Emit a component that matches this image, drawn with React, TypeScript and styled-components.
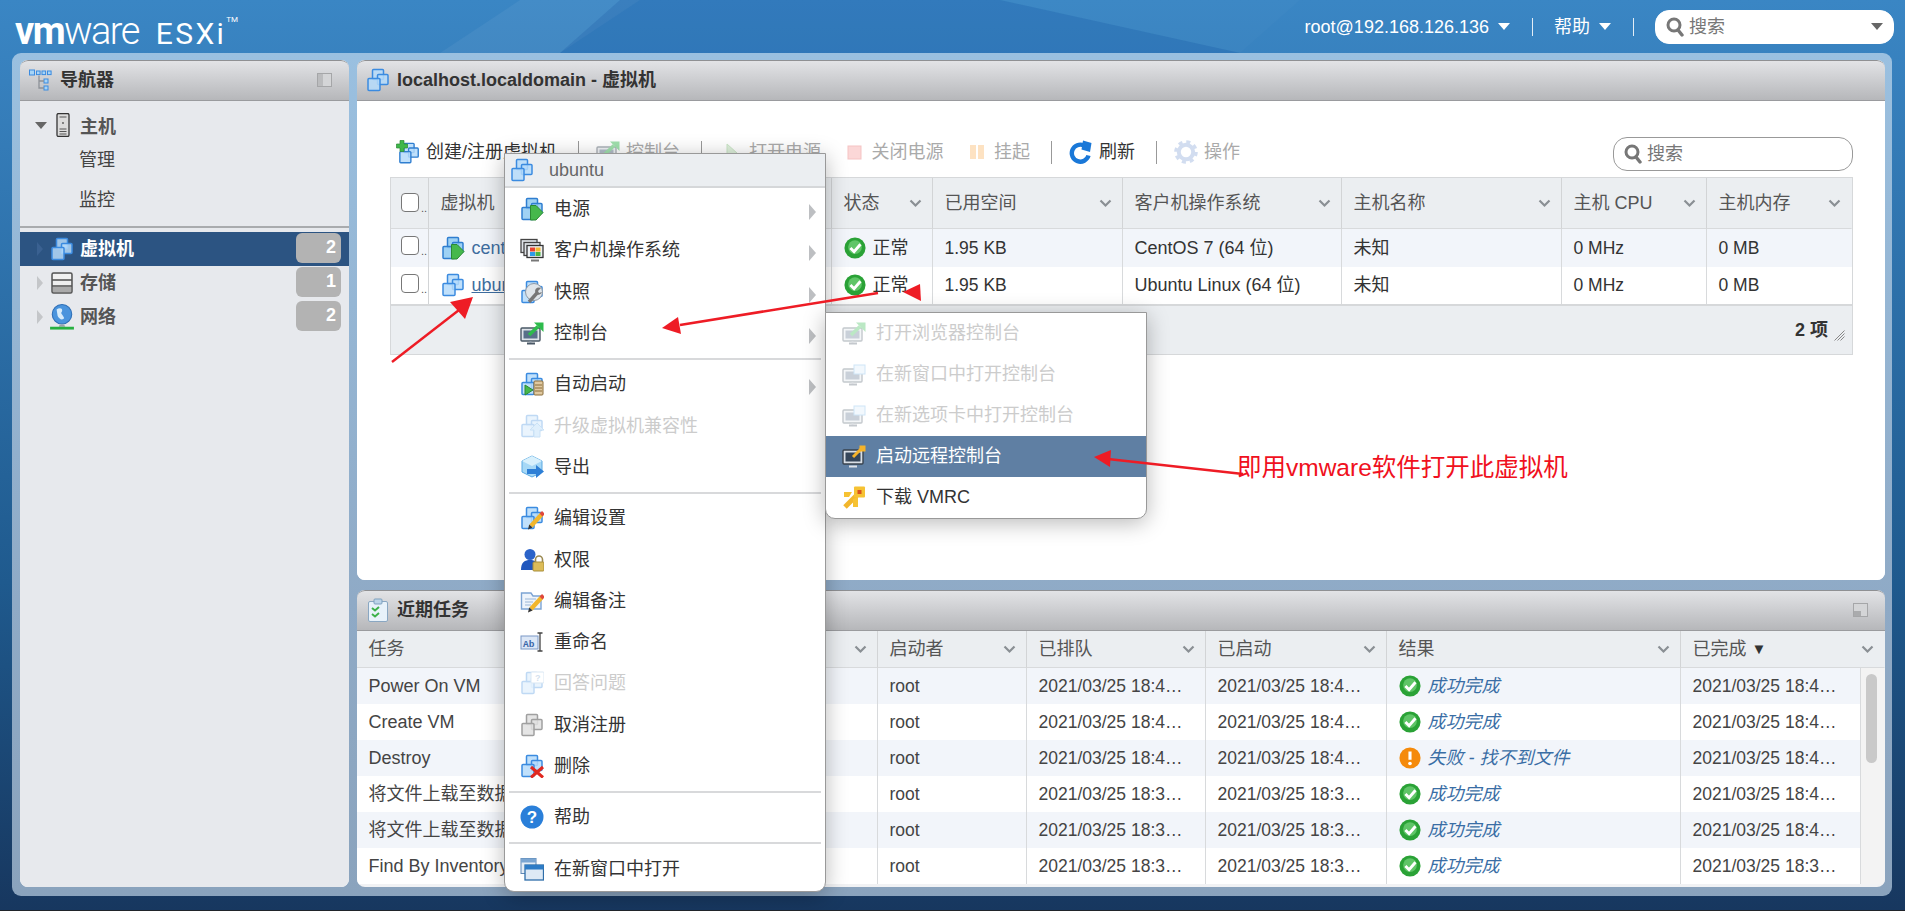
import React from "react";
import styled, { createGlobalStyle } from "styled-components";

const Global = createGlobalStyle`
  html, body { margin: 0; padding: 0; width: 1905px; height: 911px; overflow: hidden; }
  body { font-family: "Liberation Sans", "Noto Sans CJK SC", sans-serif; font-size: 18px; line-height: 20px; color: #333; }
  * { box-sizing: border-box; }
`;

const Page = styled.div`
  position: relative;
  width: 1905px;
  height: 911px;
  display: flex;
  flex-direction: column;
  overflow: hidden;
  background: linear-gradient(180deg, #3a86c4 0%, #3780bd 9%, #1f5a8e 64%, #17375f 100%);
  border-bottom: 1px solid #20242a;
`;
const Facets = styled.svg`
  position: absolute;
  left: 0;
  top: 0;
`;
const TopBar = styled.header`
  position: relative;
  height: 53px;
  flex: none;
  display: flex;
  align-items: center;
  padding: 0 11px 0 15px;
  color: #fff;
`;
const Logo = styled.div`
  display: flex;
  align-items: baseline;
  font-family: Roboto, "Liberation Sans", sans-serif;
  line-height: 1;
  margin-top: 9px;
`;
const LogoVm = styled.span`
  font-size: 38px;
  letter-spacing: -1.6px;
`;
const LogoBold = styled.b`
  font-weight: 700;
`;
const LogoLight = styled.span`
  font-weight: 300;
`;
const LogoEsx = styled.span`
  font-size: 30px;
  letter-spacing: 2.4px;
  margin-left: 17px;
`;
const LogoTm = styled.sup`
  font-size: 8px;
  align-self: flex-start;
  line-height: 1;
  margin-top: 4px;
  margin-left: 0;
`;
const TopRight = styled.div`
  margin-left: auto;
  display: flex;
  align-items: center;
`;
const TopLabel = styled.span`
  color: #fff;
`;
const WhiteCaret = styled.i`
  width: 0;
  height: 0;
  margin-left: 9px;
  border-left: 6px solid transparent;
  border-right: 6px solid transparent;
  border-top: 7px solid #fff;
`;
const TopSep = styled.i`
  width: 1px;
  height: 18px;
  background: #e3edf6;
  margin: 0 21px 0 22px;
`;
const SearchBox = styled.div<{ $w: number; $outlined?: boolean }>`
  width: ${(p) => p.$w}px;
  height: 34px;
  flex: none;
  display: flex;
  align-items: center;
  gap: 5px;
  padding: 0 10px;
  background: #fff;
  border-radius: 14px;
  border: 1px solid ${(p) => (p.$outlined ? "#999" : "#fff")};
  color: #777;
`;
const GrayCaret = styled.i`
  margin-left: auto;
  width: 0;
  height: 0;
  border-left: 6px solid transparent;
  border-right: 6px solid transparent;
  border-top: 7px solid #666;
`;
const Frame = styled.main`
  position: relative;
  width: 1880px;
  height: 843px;
  flex: none;
  margin-left: 12px;
  padding: 7px 7px 9px 8px;
  display: flex;
  gap: 8px;
  border-radius: 9px;
  background: linear-gradient(180deg, #9ac0e0 0%, #8faac6 65%, #8aa3bd 100%);
`;
const Panel = styled.section<{ $bg?: string }>`
  display: flex;
  flex-direction: column;
  overflow: hidden;
  border-radius: 8px;
  background: ${(p) => p.$bg || "#fff"};
`;
const NavPanel = styled(Panel)`
  width: 329px;
  flex: none;
`;
const RightCol = styled.div`
  flex: 1;
  min-width: 0;
  display: flex;
  flex-direction: column;
  gap: 10px;
`;
const VmPanel = styled(Panel)`
  height: 520px;
  flex: none;
`;
const TaskPanel = styled(Panel)`
  flex: 1;
  background: #f1f2f4;
`;
const PanelHead = styled.div`
  height: 41px;
  flex: none;
  display: flex;
  align-items: center;
  gap: 7px;
  padding: 0 17px 1px 9px;
  border-top: 1px solid #8f9093;
  border-bottom: 1px solid #9a9b9e;
  border-radius: 8px 8px 0 0;
  background: linear-gradient(180deg, #e2e3e6 0%, #b6b7ba 100%);
  font-weight: 700;
  color: #333;
`;
const HeadTitle = styled.span`
  flex: 1;
`;
const NavBody = styled.div`
  flex: 1;
  padding-top: 11px;
  background: #e7e9ed;
`;
const HostRow = styled.div`
  height: 26px;
  display: flex;
  align-items: center;
  padding-left: 15px;
  font-weight: 700;
  color: #555;
`;
const DownTri = styled.i`
  width: 0;
  height: 0;
  border-left: 6px solid transparent;
  border-right: 6px solid transparent;
  border-top: 7px solid #666;
  margin-right: 4px;
`;
const HostLabel = styled.span`
  margin-left: 5px;
  padding-top: 3px;
`;
const SubNav = styled.div`
  height: 40px;
  display: flex;
  align-items: center;
  padding: 3px 0 0 59px;
  color: #444;
`;
const NavDivider = styled.div`
  height: 2px;
  margin: 8px 0 4px;
  background: #a9abae;
`;
const NavItem = styled.div<{ $on?: boolean }>`
  height: 34px;
  display: flex;
  align-items: center;
  padding: 0 8px 0 17px;
  font-weight: 700;
  background: ${(p) => (p.$on ? "#2c5482" : "transparent")};
  color: ${(p) => (p.$on ? "#fff" : "#555")};
`;
const RightTri = styled.i<{ $on?: boolean }>`
  width: 0;
  height: 0;
  border-top: 7px solid transparent;
  border-bottom: 7px solid transparent;
  border-left: 6px solid ${(p) => (p.$on ? "#3a6191" : "#c4c6c9")};
  margin-right: 6px;
`;
const NavIcon = styled.span`
  width: 26px;
  height: 26px;
  flex: none;
  display: flex;
  align-items: center;
  justify-content: center;
  margin-right: 5px;
`;
const Badge = styled.span`
  margin-left: auto;
  align-self: flex-start;
  margin-top: 1px;
  width: 45px;
  height: 30px;
  padding-right: 5px;
  border-radius: 6px;
  background: #b3b3b3;
  color: #fff;
  font-weight: 700;
  text-align: right;
  line-height: 28px;
`;
const VmBody = styled.div`
  flex: 1;
  padding: 36px 32px 0 33px;
  background: #fff;
`;
const Toolbar = styled.div`
  height: 34px;
  display: flex;
  align-items: flex-start;
  gap: 20.5px;
  padding-left: 6px;
  margin-bottom: 6px;
`;
const Tool = styled.div<{ $off?: boolean }>`
  height: 29px;
  display: flex;
  align-items: center;
  gap: 6px;
  color: ${(p) => (p.$off ? "#aaa" : "#333")};
  white-space: nowrap;
`;
const ToolIcon = styled.span<{ $off?: boolean }>`
  width: 24px;
  height: 24px;
  display: flex;
  opacity: ${(p) => (p.$off ? 0.45 : 1)};
`;
const ToolSep = styled.i`
  width: 1px;
  height: 23px;
  margin: 4px -3px 0 0;
  background: #999;
`;
const ToolSearch = styled.div`
  margin-left: auto;
`;
const VmGrid = styled.div`
  display: grid;
  grid-template-columns: 38px 403px 101px 190px 219px 220px 145px 145px;
  grid-template-rows: 51px 38px 37px;
  border-top: 1px solid #d6d8da;
  border-left: 1px solid #d6d8da;
  border-right: 1px solid #d6d8da;
`;
const HeadCell = styled.div<{ $noRule?: boolean }>`
  display: flex;
  align-items: center;
  padding: 0 10px 0 11.5px;
  background: #ebeef1;
  color: #555;
  border-right: 1px solid ${(p) => (p.$noRule ? "transparent" : "#d2d4d6")};
  border-bottom: 1px solid #d8dadc;
  white-space: nowrap;
`;
const Cell = styled.div<{ $alt?: boolean; $noRule?: boolean; $num?: boolean }>`
  display: flex;
  align-items: center;
  gap: 7px;
  padding: 0 11.5px 1px;
  font-size: ${(p) => (p.$num ? "17.5px" : "18px")};
  background: ${(p) => (p.$alt ? "#f2f5fa" : "#fff")};
  border-right: 1px solid ${(p) => (p.$noRule ? "transparent" : "#d8dadc")};
  color: #333;
  white-space: nowrap;
  overflow: hidden;
`;
const Chevron = styled.svg`
  margin-left: auto;
  flex: none;
`;
const CheckCell = styled.div<{ $top: number; $bg: string }>`
  display: flex;
  align-items: flex-start;
  padding: ${(p) => p.$top}px 0 0 10px;
  background: ${(p) => p.$bg};
  border-right: 1px solid #d2d4d6;
  border-bottom: ${(p) => (p.$top > 10 ? "1px solid #d8dadc" : "none")};
`;
const Check = styled.i`
  width: 18px;
  height: 19px;
  flex: none;
  background: #fff;
  border: 1px solid #777;
  border-radius: 4px;
`;
const Dots = styled.span`
  font-size: 11px;
  line-height: 1;
  color: #555;
  align-self: flex-start;
  margin: 10px 0 0 2px;
`;
const VmLink = styled.span<{ $under?: boolean }>`
  color: #3e6d9f;
  text-decoration: ${(p) => (p.$under ? "underline" : "none")};
`;
const GridFoot = styled.div`
  height: 51px;
  display: flex;
  align-items: center;
  justify-content: flex-end;
  gap: 6px;
  padding: 0 7px 0 0;
  background: #ebeef1;
  border: 1px solid #d6d8da;
  border-top-width: 2px;
  font-weight: 700;
`;
const Grip = styled.svg`
  margin-top: 10px;
`;
const TaskHeadGrid = styled.div`
  display: grid;
  height: 37px;
  flex: none;
  grid-template-columns: 303px 218px 149px 179px 181px 294px 204px;
`;
const TaskWrap = styled.div`
  display: flex;
`;
const TaskGrid = styled.div`
  display: grid;
  width: 1503px;
  grid-template-columns: 303px 218px 149px 179px 181px 294px 179px;
  grid-auto-rows: 36px;
`;
const TaskCell = styled(Cell)`
  color: #444;
`;
const ScrollTrack = styled.div`
  flex: 1;
  height: 216px;
  background: #f3f3f3;
  border-left: 1px solid #d8dadc;
  padding: 6px 0 0 5px;
`;
const ScrollThumb = styled.div`
  width: 11px;
  height: 89px;
  border-radius: 6px;
  background: #c9c9c9;
`;
const Result = styled.span`
  color: #3a6ea5;
  font-style: italic;
`;
const SortMark = styled.span`
  font-size: 15px;
  color: #333;
  margin-left: 5px;
`;
const Menu = styled.div<{ $x: number; $y: number; $z: number; $pad?: number }>`
  position: absolute;
  left: ${(p) => p.$x}px;
  top: ${(p) => p.$y}px;
  z-index: ${(p) => p.$z};
  width: 322px;
  padding-bottom: ${(p) => p.$pad || 0}px;
  background: #fff;
  border: 1px solid #999;
  border-radius: 0 0 10px 10px;
  box-shadow: 0 4px 22px rgba(0, 0, 0, 0.28);
  overflow: hidden;
`;
const MenuHead = styled.div`
  height: 34px;
  display: flex;
  align-items: center;
  gap: 15px;
  padding-left: 5px;
  background: #ebeef1;
  border-bottom: 2px solid #d5d7d9;
  color: #666;
`;
const MenuRow = styled.div<{ $off?: boolean; $on?: boolean }>`
  height: 41.3px;
  display: flex;
  align-items: center;
  gap: 10px;
  padding: 1px 9px 0 15px;
  color: ${(p) => (p.$on ? "#fff" : p.$off ? "#ccc" : "#333")};
  background: ${(p) => (p.$on ? "#5f7fa3" : "transparent")};
`;
const SubRow = styled(MenuRow)`
  height: 41px;
  padding-top: 0;
  padding-left: 16px;
  padding-bottom: 1px;
`;
const MenuIcon = styled.span<{ $off?: boolean }>`
  width: 24px;
  height: 24px;
  flex: none;
  display: flex;
  opacity: ${(p) => (p.$off ? 0.32 : 1)};
`;
const MenuArrow = styled.i`
  margin-left: auto;
  margin-top: 6px;
  width: 0;
  height: 0;
  border-top: 8px solid transparent;
  border-bottom: 8px solid transparent;
  border-left: 7px solid #bdbfc2;
`;
const MenuSep = styled.div`
  height: 2px;
  margin: 5px 4px 3px;
  background: #d8d9db;
`;
const Annotation = styled.div`
  position: absolute;
  left: 1237px;
  top: 454px;
  z-index: 6;
  font-size: 24.5px;
  line-height: 28px;
  color: #f01020;
  white-space: nowrap;
`;
const ArrowLayer = styled.svg`
  position: absolute;
  left: 0;
  top: 0;
  z-index: 5;
  pointer-events: none;
`;

const I = ({ children, s = 24 }: { children: React.ReactNode; s?: number }) => (
  <svg width={s} height={s} viewBox="0 0 24 24">{children}</svg>
);
const VmShape = ({ c = "#3b8be0", f = "#b5dbfa" }: { c?: string; f?: string }) => (
  <g fill={f} stroke={c} strokeWidth="1.5" fillOpacity="0.85">
    <rect x="6.5" y="1.5" width="11" height="10" rx="1" />
    <rect x="11.5" y="6.5" width="10.5" height="10" rx="1" />
    <rect x="2" y="10.5" width="12" height="12" rx="1" />
  </g>
);
const Pencil = () => (
  <g>
    <path d="M22 8 L11 20" stroke="#f2b62c" strokeWidth="4.4" />
    <path d="M23.5 6.4 L21 9" stroke="#e0483c" strokeWidth="4" />
    <path d="M8 23.5 L9.2 18.5 L12.6 21.6 Z" fill="#333" />
  </g>
);
const Monitor = ({ f = "#59708a" }: { f?: string }) => (
  <g>
    <rect x="1" y="7" width="19" height="13" rx="1" fill="#dfe4ea" stroke="#4a5866" strokeWidth="1.4" />
    <rect x="3.5" y="9.5" width="14" height="8" fill={f} />
    <path d="M7 22.5h8" stroke="#4a5866" strokeWidth="2" />
    <path d="M10.5 20v2" stroke="#8a96a2" strokeWidth="2" />
  </g>
);
const GoArrow = ({ c }: { c: string }) => (
  <g>
    <path d="M9 14 L18 5.5" stroke={c} strokeWidth="3.6" />
    <path d="M14 1.5 H23.5 V11 Z" fill={c} />
  </g>
);
const IconVm = () => <I><VmShape /></I>;
const IconVmOn = () => (
  <I>
    <VmShape c="#2f7ed0" f="#8fcaf2" />
    <path d="M10.5 8.5h5.5l7 7-7 7.5h-5.5z" fill="#46b84c" stroke="#2b8a33" />
  </I>
);
const IconGuest = () => (
  <I>
    <rect x="1" y="1.5" width="16" height="13" fill="#dfe3e7" stroke="#444" strokeWidth="1.3" />
    <rect x="4" y="4.5" width="16" height="13" fill="#dfe3e7" stroke="#444" strokeWidth="1.3" />
    <rect x="7" y="7.5" width="16" height="12" fill="#eef1f4" stroke="#333" strokeWidth="1.3" />
    <rect x="10" y="9.5" width="5" height="4" fill="#e8432e" />
    <rect x="15.5" y="9.5" width="5" height="4" fill="#f5b82e" />
    <rect x="10" y="14" width="5" height="4" fill="#2e9be8" />
    <rect x="15.5" y="14" width="5" height="4" fill="#4bb543" />
    <path d="M11 22.5h8" stroke="#777" strokeWidth="2" />
  </I>
);
const IconSnap = () => (
  <I>
    <VmShape />
    <circle cx="14" cy="12" r="8.5" fill="#dfe5ea" stroke="#8d99a6" />
    <path d="M9 22 L17 13" stroke="#777" strokeWidth="3.4" />
    <path d="M15 11a4 4 0 0 1 6-3l-3 3 1 2 3-1a4 4 0 0 1-6 2z" fill="#777" />
  </I>
);
const IconConsole = ({ c = "#2ebb4c" }: { c?: string }) => (
  <I><Monitor /><GoArrow c={c} /></I>
);
const IconConsoleWin = () => (
  <I><Monitor /><rect x="12" y="3" width="11" height="9" fill="#d7ecfb" stroke="#6fb2e8" /></I>
);
const IconRemote = () => (
  <I>
    <rect x="1" y="6" width="20" height="14" rx="1" fill="#d9dfe6" stroke="#39434e" strokeWidth="1.4" />
    <rect x="3.5" y="8.5" width="15" height="9" fill="#35465a" />
    <path d="M7 22.5h8" stroke="#dfe4ea" strokeWidth="2" />
    <path d="M11 13 L19 5" stroke="#f5b32a" strokeWidth="3" />
    <rect x="17.5" y="1.5" width="6" height="6" fill="#f5b32a" />
  </I>
);
const IconVmrc = () => (
  <I>
    <path d="M3 22 L15 10" stroke="#f2b62c" strokeWidth="5" />
    <path d="M2 7 H10 L7 12 H2 Z" fill="#f6c233" />
    <path d="M11 22 V14 L16 12 V22 Z" fill="#f6c233" />
    <rect x="12" y="1.5" width="11" height="11" rx="1" fill="#f6c233" />
    <rect x="15.5" y="5" width="4" height="4" fill="#d9531e" />
  </I>
);
const IconAuto = () => (
  <I>
    <VmShape />
    <path d="M5 13 L13 18 L5 23 Z" fill="#46b84c" stroke="#2b8a33" />
    <rect x="14" y="9" width="9" height="14" rx="1" fill="#e0c9a0" stroke="#8a6d3b" />
    <path d="M15 13h7M15 16h7M15 19h7" stroke="#8a6d3b" />
  </I>
);
const IconUpgrade = () => (
  <I>
    <VmShape />
    <path d="M17 9 L24 16 H20 V23 H14 V16 H10 Z" fill="#9fd0f7" stroke="#5ea7e6" />
  </I>
);
const IconExport = () => (
  <I>
    <path d="M2 6 L12 1 L22 6 V17 L12 22 L2 17 Z" fill="#a6d8f6" stroke="#5aa9e2" />
    <path d="M2 6 L12 11 L22 6 L12 1 Z" fill="#d8f0fc" />
    <path d="M7 14h9v-4l8 6.5-8 6.5v-4H7z" fill="#2d7fd6" />
  </I>
);
const IconEdit = () => (
  <I><VmShape /><Pencil /></I>
);
const IconPerm = () => (
  <I>
    <circle cx="10" cy="6.5" r="5.5" fill="#2b63c9" />
    <path d="M1 22c0-8 4-10 9-10s9 2 9 10z" fill="#2057bd" />
    <path d="M15.5 14v-2.5a3.5 3.5 0 0 1 7 0V14" fill="none" stroke="#9b8a52" strokeWidth="1.6" />
    <rect x="13" y="14" width="11" height="9" rx="1" fill="#dcbc58" stroke="#a88e3a" />
  </I>
);
const IconNote = () => (
  <I>
    <path d="M1.5 4 H11 L13 7 H21 V20 H1.5 Z" fill="#eef4fb" stroke="#7ca4d4" strokeWidth="1.4" />
    <path d="M5 10h11M5 13h8M5 16h6" stroke="#9ab6d6" />
    <Pencil />
  </I>
);
const IconRename = () => (
  <I>
    <rect x="1" y="6" width="17" height="13" fill="#dce7f6" stroke="#7a98c6" />
    <text x="3" y="16.5" fontSize="9.5" fontWeight="700" fontFamily="Liberation Mono, monospace" fill="#3a66a8">Ab</text>
    <path d="M17.5 3h5M20 3v18M17.5 21h5" stroke="#444" strokeWidth="1.3" fill="none" />
  </I>
);
const IconAnswer = () => (
  <I>
    <VmShape />
    <rect x="11" y="1" width="13" height="11" rx="1" fill="#fff" stroke="#8fb7dd" />
    <text x="15" y="10" fontSize="9" fontWeight="700" fontFamily="Liberation Sans, sans-serif" fill="#7aa3cc">?</text>
  </I>
);
const IconUnreg = () => <I><VmShape c="#a0a0a0" f="#e1e1e1" /></I>;
const IconDelete = () => (
  <I>
    <VmShape />
    <path d="M11 13 L23 23.5 M23 13 L11 23.5" stroke="#e0281f" strokeWidth="3" />
  </I>
);
const IconHelp = () => (
  <I>
    <circle cx="12" cy="12" r="11.5" fill="#2a7fd9" />
    <text x="12" y="18" textAnchor="middle" fontSize="17" fontWeight="700" fontFamily="Liberation Sans, sans-serif" fill="#fff">?</text>
  </I>
);
const IconNewWin = () => (
  <I>
    <rect x="1" y="1.5" width="15" height="15" fill="#e4edf6" stroke="#5f88b5" />
    <rect x="1" y="1.5" width="15" height="4" fill="#7ba6d2" />
    <rect x="5" y="8" width="18.5" height="15" fill="#dde9f5" stroke="#2e6ea9" strokeWidth="1.3" />
    <rect x="5" y="8" width="18.5" height="4.5" fill="#2e7cc6" />
  </I>
);
const IconOk = () => (
  <I s={22}>
    <circle cx="12" cy="12" r="11.5" fill="#2aa236" />
    <circle cx="12" cy="11" r="7.5" fill="#5fc567" />
    <path d="M7 12 L11 16 L18 8" fill="none" stroke="#fff" strokeWidth="3.2" />
  </I>
);
const IconWarn = () => (
  <I s={22}>
    <circle cx="12" cy="12" r="11.5" fill="#f58a0b" />
    <path d="M12 5v9" stroke="#fff" strokeWidth="3.4" />
    <circle cx="12" cy="18" r="2" fill="#fff" />
  </I>
);
const IconTree = () => (
  <I>
    <rect x="0.5" y="2" width="5" height="5" fill="#a6d4f7" stroke="#3b8be0" />
    <rect x="7.5" y="3" width="3.6" height="3.6" fill="#a6d4f7" stroke="#3b8be0" />
    <rect x="13" y="3" width="3.6" height="3.6" fill="#a6d4f7" stroke="#3b8be0" />
    <rect x="18.5" y="3" width="3.6" height="3.6" fill="#a6d4f7" stroke="#3b8be0" />
    <rect x="15" y="11" width="4" height="4" fill="#a6d4f7" stroke="#3b8be0" />
    <rect x="15" y="18" width="4" height="4" fill="#a6d4f7" stroke="#3b8be0" />
    <path d="M10 7.5V20H15M10 13H15" fill="none" stroke="#8d9198" strokeWidth="1.3" />
  </I>
);
const IconHost = () => (
  <I>
    <rect x="6" y="0.5" width="12" height="23" rx="1.5" fill="#dcdcdc" stroke="#333" strokeWidth="1.3" />
    <path d="M8.5 4h7M8.5 16h7M8.5 18.5h7M8.5 21h7" stroke="#555" />
    <circle cx="12" cy="10" r="0.9" fill="#555" />
  </I>
);
const IconStorage = () => (
  <I>
    <rect x="2" y="2" width="20" height="20" rx="1.5" fill="#d8d8d8" stroke="#555" strokeWidth="1.5" />
    <rect x="3" y="3" width="18" height="5" fill="#f1f1f1" />
    <path d="M2 9h20M2 15h20" stroke="#555" strokeWidth="1.5" />
    <rect x="3" y="10" width="18" height="4" fill="#eee" />
    <rect x="3" y="16" width="18" height="5" fill="#aaa" />
  </I>
);
const IconNet = () => (
  <I s={26}>
    <circle cx="12" cy="9.5" r="9" fill="#4a94dd" stroke="#2e6fb7" />
    <path d="M7 5 C10 3 13 4 12 7 C10 9 13 10 14 13 C12 16 9 13 8 11 Z" fill="#d6ebfa" />
    <path d="M10 19h4l1 2H9z" fill="#9aa3ab" />
    <rect x="1" y="21" width="22" height="2.6" fill="#27b041" />
  </I>
);
const IconCreate = () => (
  <I>
    <g transform="translate(2 2) scale(0.92)"><VmShape c="#2f7ed0" /></g>
    <path d="M4 0.5h4V4h3.5v4H8v3.5H4V8H0.5V4H4z" fill="#3fb74a" stroke="#2b8a33" strokeWidth="0.7" />
  </I>
);
const IconStop = () => (
  <I><rect x="6" y="6" width="13" height="13" fill="#f7a8a8" stroke="#ea7d7d" /></I>
);
const IconPause = () => (
  <I>
    <rect x="6" y="5" width="6" height="14" fill="#fbbf79" />
    <rect x="14" y="5" width="6" height="14" fill="#fbbf79" />
  </I>
);
const IconPlay = () => (
  <I><path d="M8 4 L18 13 L8 20 Z" fill="#b8e0b0" stroke="#8cc784" /></I>
);
const IconRefresh = () => (
  <I>
    <path d="M19.5 15.5 A8.5 8.5 0 1 1 15 5.5" fill="none" stroke="#1a78d8" strokeWidth="4.4" />
    <path d="M14 0.5 L22.5 3 L21 12 L12.5 9.5 Z" fill="#1a78d8" />
  </I>
);
const IconGear = () => (
  <I>
    <circle cx="12" cy="12" r="10" fill="none" stroke="#9db6e0" strokeWidth="3.6" strokeDasharray="4 3.85" />
    <circle cx="12" cy="12" r="7.2" fill="none" stroke="#9db6e0" strokeWidth="4" />
  </I>
);
const IconTasks = () => (
  <I>
    <rect x="2.5" y="3.5" width="19" height="20" rx="1.5" fill="#e8f2fa" stroke="#8aa7c2" />
    <rect x="8" y="1" width="8" height="5" rx="1" fill="#bcd4e8" stroke="#7ea1bf" />
    <path d="M6 10l3 2.5 4-3.5M6 16l3 2.5 4-3.5" fill="none" stroke="#3db14a" strokeWidth="2" />
  </I>
);
const Glass = () => (
  <svg width="18" height="20" viewBox="0 0 18 20">
    <circle cx="8" cy="8" r="6" fill="#fff" stroke="#777" strokeWidth="3" />
    <path d="M12 13 L16 18" stroke="#777" strokeWidth="3.4" strokeLinecap="round" />
  </svg>
);
const Collapse = () => (
  <svg width="15" height="14" viewBox="0 0 15 14">
    <rect x="0.5" y="0.5" width="14" height="13" fill="#d4d5d7" stroke="#a5a6a8" />
    <rect x="1" y="1" width="5" height="12" fill="#bbbcbe" />
  </svg>
);
const CollapseSmall = () => (
  <svg width="15" height="14" viewBox="0 0 15 14">
    <rect x="0.5" y="0.5" width="14" height="13" fill="#d4d5d7" stroke="#a5a6a8" />
    <rect x="1" y="8" width="7" height="5" fill="#aaabad" />
  </svg>
);
const Chev = () => (
  <Chevron width="13" height="9" viewBox="0 0 13 9">
    <path d="M1.5 1.5 L6.5 6.5 L11.5 1.5" fill="none" stroke="#8a8f94" strokeWidth="2.2" />
  </Chevron>
);
const GripIcon = () => (
  <Grip width="11" height="11" viewBox="0 0 11 11">
    <path d="M10.5 0.5 L0.5 10.5 M10.5 3.5 L3.5 10.5 M10.5 6.5 L6.5 10.5" stroke="#888" strokeWidth="1" />
  </Grip>
);

const menuGroups: { label: string; icon: React.ReactNode; more?: boolean; off?: boolean }[][] = [
  [
    { label: "电源", icon: <IconVmOn />, more: true },
    { label: "客户机操作系统", icon: <IconGuest />, more: true },
    { label: "快照", icon: <IconSnap />, more: true },
    { label: "控制台", icon: <IconConsole />, more: true },
  ],
  [
    { label: "自动启动", icon: <IconAuto />, more: true },
    { label: "升级虚拟机兼容性", icon: <IconUpgrade />, off: true },
    { label: "导出", icon: <IconExport /> },
  ],
  [
    { label: "编辑设置", icon: <IconEdit /> },
    { label: "权限", icon: <IconPerm /> },
    { label: "编辑备注", icon: <IconNote /> },
    { label: "重命名", icon: <IconRename /> },
    { label: "回答问题", icon: <IconAnswer />, off: true },
    { label: "取消注册", icon: <IconUnreg /> },
    { label: "删除", icon: <IconDelete /> },
  ],
  [{ label: "帮助", icon: <IconHelp /> }],
  [{ label: "在新窗口中打开", icon: <IconNewWin /> }],
];

const vmHeaders = ["状态", "已用空间", "客户机操作系统", "主机名称", "主机 CPU", "主机内存"];
const vmRows = [
  { name: "centos", icon: <IconVmOn />, os: "CentOS 7 (64 位)", under: false },
  { name: "ubuntu", icon: <IconVm />, os: "Ubuntu Linux (64 位)", under: true },
];
const tasks = [
  ["Power On VM", "18:4…", "18:4…", "ok", "18:4…"],
  ["Create VM", "18:4…", "18:4…", "ok", "18:4…"],
  ["Destroy", "18:4…", "18:4…", "warn", "18:4…"],
  ["将文件上载至数据存储", "18:3…", "18:3…", "ok", "18:4…"],
  ["将文件上载至数据存储", "18:3…", "18:3…", "ok", "18:4…"],
  ["Find By Inventory Path", "18:3…", "18:3…", "ok", "18:3…"],
];
const taskHeads = ["任务", "目标", "启动者", "已排队", "已启动", "结果"];

export default function App() {
  return (
    <Page>
      <Global />
      <Facets width="1905" height="53" viewBox="0 0 1905 53">
        <path d="M440 53 L520 0 H640 L560 53 Z" fill="#fff" opacity="0.05" />
        <path d="M560 53 L620 0 H1000 L1240 53 Z" fill="#16529e" opacity="0.22" />
        <path d="M1000 0 H1300 L1240 53 Z" fill="#fff" opacity="0.02" />
      </Facets>
      <TopBar>
        <Logo>
          <LogoVm><LogoBold>vm</LogoBold><LogoLight>ware</LogoLight></LogoVm>
          <LogoEsx>ESXi</LogoEsx>
          <LogoTm>TM</LogoTm>
        </Logo>
        <TopRight>
          <TopLabel>root@192.168.126.136</TopLabel>
          <WhiteCaret />
          <TopSep />
          <TopLabel>帮助</TopLabel>
          <WhiteCaret />
          <TopSep />
          <SearchBox $w={239}>
            <Glass />
            搜索
            <GrayCaret />
          </SearchBox>
        </TopRight>
      </TopBar>
      <Frame>
        <NavPanel>
          <PanelHead>
            <IconTree />
            <HeadTitle>导航器</HeadTitle>
            <Collapse />
          </PanelHead>
          <NavBody>
            <HostRow>
              <DownTri />
              <IconHost />
              <HostLabel>主机</HostLabel>
            </HostRow>
            <SubNav>管理</SubNav>
            <SubNav>监控</SubNav>
            <NavDivider />
            <NavItem $on>
              <RightTri $on />
              <NavIcon><IconVm /></NavIcon>
              虚拟机
              <Badge>2</Badge>
            </NavItem>
            <NavItem>
              <RightTri />
              <NavIcon><IconStorage /></NavIcon>
              存储
              <Badge>1</Badge>
            </NavItem>
            <NavItem>
              <RightTri />
              <NavIcon><IconNet /></NavIcon>
              网络
              <Badge>2</Badge>
            </NavItem>
          </NavBody>
        </NavPanel>
        <RightCol>
          <VmPanel>
            <PanelHead>
              <IconVm />
              <HeadTitle>localhost.localdomain - 虚拟机</HeadTitle>
            </PanelHead>
            <VmBody>
              <Toolbar>
                <Tool><ToolIcon><IconCreate /></ToolIcon>创建/注册虚拟机</Tool>
                <ToolSep />
                <Tool $off><ToolIcon $off><IconConsole /></ToolIcon>控制台</Tool>
                <ToolSep />
                <Tool $off><ToolIcon $off><IconPlay /></ToolIcon>打开电源</Tool>
                <Tool $off><ToolIcon $off><IconStop /></ToolIcon>关闭电源</Tool>
                <Tool $off><ToolIcon $off><IconPause /></ToolIcon>挂起</Tool>
                <ToolSep />
                <Tool><ToolIcon><IconRefresh /></ToolIcon>刷新</Tool>
                <ToolSep />
                <Tool $off><ToolIcon $off><IconGear /></ToolIcon>操作</Tool>
                <ToolSearch>
                  <SearchBox $w={240} $outlined>
                    <Glass />
                    搜索
                  </SearchBox>
                </ToolSearch>
              </Toolbar>
              <VmGrid>
                <CheckCell $top={15} $bg="#ebeef1"><Check /><Dots>..</Dots></CheckCell>
                <HeadCell>虚拟机<Chev /></HeadCell>
                {vmHeaders.map((h, i) => (
                  <HeadCell key={h} $noRule={i === vmHeaders.length - 1}>{h}<Chev /></HeadCell>
                ))}
                {vmRows.map((r, i) => {
                  const alt = i === 0;
                  return (
                    <React.Fragment key={r.name}>
                      <CheckCell $top={7} $bg={alt ? "#f2f5fa" : "#fff"}><Check /><Dots>..</Dots></CheckCell>
                      <Cell $alt={alt}>{r.icon}<VmLink $under={r.under}>{r.name}</VmLink></Cell>
                      <Cell $alt={alt}><IconOk />正常</Cell>
                      <Cell $alt={alt} $num>1.95 KB</Cell>
                      <Cell $alt={alt}>{r.os}</Cell>
                      <Cell $alt={alt}>未知</Cell>
                      <Cell $alt={alt} $num>0 MHz</Cell>
                      <Cell $alt={alt} $noRule $num>0 MB</Cell>
                    </React.Fragment>
                  );
                })}
              </VmGrid>
              <GridFoot>2 项<GripIcon /></GridFoot>
            </VmBody>
          </VmPanel>
          <TaskPanel>
            <PanelHead>
              <IconTasks />
              <HeadTitle>近期任务</HeadTitle>
              <CollapseSmall />
            </PanelHead>
            <TaskHeadGrid>
              {taskHeads.map((h) => (
                <HeadCell key={h}>{h}<Chev /></HeadCell>
              ))}
              <HeadCell $noRule>已完成<SortMark>▼</SortMark><Chev /></HeadCell>
            </TaskHeadGrid>
            <TaskWrap>
              <TaskGrid>
                {tasks.map((t, i) => {
                  const alt = i % 2 === 0;
                  const pre = "2021/03/25 ";
                  return (
                    <React.Fragment key={i}>
                      <TaskCell $alt={alt}>{t[0]}</TaskCell>
                      <TaskCell $alt={alt} />
                      <TaskCell $alt={alt} $num>root</TaskCell>
                      <TaskCell $alt={alt} $num>{pre + t[1]}</TaskCell>
                      <TaskCell $alt={alt} $num>{pre + t[2]}</TaskCell>
                      <TaskCell $alt={alt}>
                        {t[3] === "ok" ? <IconOk /> : <IconWarn />}
                        <Result>{t[3] === "ok" ? "成功完成" : "失败 - 找不到文件"}</Result>
                      </TaskCell>
                      <TaskCell $alt={alt} $noRule $num>{pre + t[4]}</TaskCell>
                    </React.Fragment>
                  );
                })}
              </TaskGrid>
              <ScrollTrack><ScrollThumb /></ScrollTrack>
            </TaskWrap>
          </TaskPanel>
        </RightCol>
      </Frame>
      <Menu $x={504} $y={153} $z={3} $pad={2}>
        <MenuHead><IconVm />ubuntu</MenuHead>
        {menuGroups.map((g, i) => (
          <React.Fragment key={i}>
            {i > 0 && <MenuSep />}
            {g.map((m) => (
              <MenuRow key={m.label} $off={m.off}>
                <MenuIcon $off={m.off}>{m.icon}</MenuIcon>
                {m.label}
                {m.more && <MenuArrow />}
              </MenuRow>
            ))}
          </React.Fragment>
        ))}
      </Menu>
      <Menu $x={825} $y={312} $z={4}>
        <SubRow $off><MenuIcon $off><IconConsole /></MenuIcon>打开浏览器控制台</SubRow>
        <SubRow $off><MenuIcon $off><IconConsoleWin /></MenuIcon>在新窗口中打开控制台</SubRow>
        <SubRow $off><MenuIcon $off><IconConsoleWin /></MenuIcon>在新选项卡中打开控制台</SubRow>
        <SubRow $on><MenuIcon><IconRemote /></MenuIcon>启动远程控制台</SubRow>
        <SubRow><MenuIcon><IconVmrc /></MenuIcon>下载 VMRC</SubRow>
      </Menu>
      <ArrowLayer width="1905" height="911" viewBox="0 0 1905 911">
        <g fill="#ee1c25" stroke="none">
          <path d="M392 362 L459 310" stroke="#ee1c25" strokeWidth="2.4" fill="none" />
          <polygon points="473,297 465,319 450,302" />
          <path d="M878 293 L680 325" stroke="#ee1c25" strokeWidth="2.6" fill="none" />
          <polygon points="662,328 678,317 681,334" />
          <polygon points="903,292 920,284 921,301" />
          <path d="M1243 474 L1108 459" stroke="#ee1c25" strokeWidth="2.6" fill="none" />
          <polygon points="1094,457 1111,450 1110,467" />
        </g>
      </ArrowLayer>
      <Annotation>即用vmware软件打开此虚拟机</Annotation>
    </Page>
  );
}
